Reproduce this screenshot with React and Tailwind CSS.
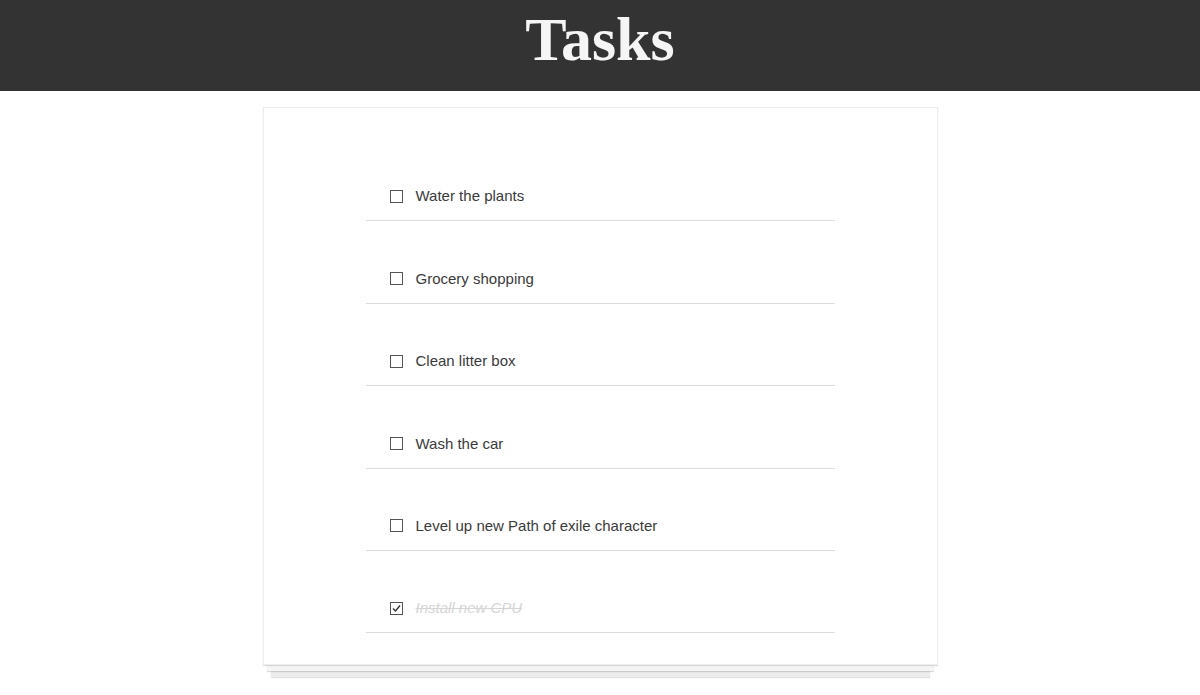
import React, { useState } from "react";

const initialTasks = [
  { id: 1, title: "Water the plants", done: false },
  { id: 2, title: "Grocery shopping", done: false },
  { id: 3, title: "Clean litter box", done: false },
  { id: 4, title: "Wash the car", done: false },
  { id: 5, title: "Level up new Path of exile character", done: false },
  { id: 6, title: "Install new CPU", done: true },
];

const CheckBox = ({ checked, onClick }) => (
  <button
    onClick={onClick}
    className="w-[13px] h-[13px] border border-[#555] bg-white flex items-center justify-center shrink-0"
    aria-label="toggle task"
  >
    {checked && (
      <svg viewBox="0 0 11 11" className="w-[11px] h-[11px]">
        <path d="M2 5.5 L4.5 8 L9 2.5" fill="none" stroke="#333" strokeWidth="1.4" />
      </svg>
    )}
  </button>
);

export default function App() {
  const [tasks, setTasks] = useState(initialTasks);

  const toggle = (id) => {
    setTasks(tasks.map((t) => (t.id === id ? { ...t, done: !t.done } : t)));
  };

  return (
    <div className="min-h-[695px] bg-white font-['Liberation_Sans',Arial,sans-serif]">
      {/* Header */}
      <header className="h-[91px] bg-[#333333] flex items-center justify-center">
        <h1 className="font-['Liberation_Serif','Times_New_Roman',serif] font-bold text-[62px] leading-none text-[#f5f5f5] mt-[-14px]">
          Tasks
        </h1>
      </header>

      {/* Card with stacked paper effect */}
      <main className="w-[675px] mx-auto mt-4 bg-white border border-[#ededed] pt-[31px] pb-[31px] shadow-[0_1px_1px_rgba(0,0,0,0.12),0_10px_0_-4px_#f5f5f5,0_11px_1px_-4px_rgba(0,0,0,0.14),0_20px_0_-8px_#ececec,0_21px_1px_-8px_rgba(0,0,0,0.12)]">
        <ul className="w-[469px] mx-auto">
          {tasks.map((task) => (
            <li
              key={task.id}
              className="flex items-center gap-[13px] pl-[24px] pt-[48.4px] pb-[15px] border-b border-[#dcdcdc]"
            >
              <CheckBox checked={task.done} onClick={() => toggle(task.id)} />
              <span
                className={
                  task.done
                    ? "text-[15px] leading-[18px] italic line-through text-[#d5d5d5]"
                    : "text-[15px] leading-[18px] text-[#3a3a3a]"
                }
              >
                {task.title}
              </span>
            </li>
          ))}
        </ul>
      </main>
    </div>
  );
}
